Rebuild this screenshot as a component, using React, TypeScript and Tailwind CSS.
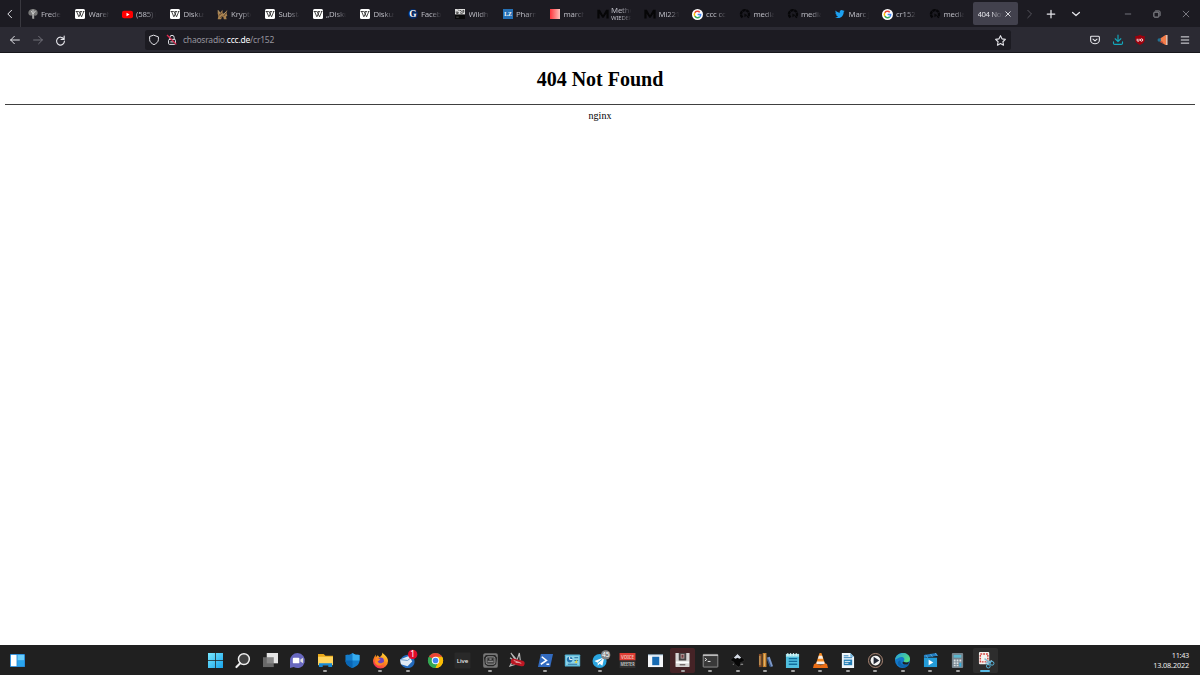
import React from "react";

type IconProps = { children: React.ReactNode; size?: string; box?: string };

function Svg({ children, size = "h-[10px] w-[10px]", box = "0 0 16 16" }: IconProps) {
  return (
    <svg viewBox={box} className={`${size} block shrink-0 overflow-visible`} fill="none">
      {children}
    </svg>
  );
}

const Wiki = () => (
  <Svg>
    <rect width="16" height="16" rx="2.500" fill="#fff" />
    <path d="M1 4h5M7.500 4H11m1.500 0H15M2.500 4l3.700 8.500L8 8.500M6.500 4l4 8.500L14 4M10 4 8 8.500" stroke="#222" strokeWidth="1.300" />
  </Svg>
);
const Tree = () => (
  <Svg>
    <path d="M8 0c4 0 7.500 2 7.500 6S13 11 10 10.500V16H7v-5.500C3 11 .5 9.500.5 6S4 0 8 0Z" fill="#777" />
    <path d="M8 1v14M5 3l3 5M12 3 8 8" stroke="#ccc" strokeWidth="1.500" />
  </Svg>
);
const Youtube = () => (
  <Svg size="h-[11px] w-[11px]">
    <rect y="2.500" width="16" height="11" rx="3" fill="#f00" />
    <path d="m6.500 5.500 4.500 2.500-4.500 2.500Z" fill="#fff" />
  </Svg>
);
const Beast = () => (
  <Svg size="h-[11px] w-[11px]">
    <path d="M1 1l3 5 4-5v5l3 1 4-6-1 6 1 3-2 1 1 4h-4l-1-4-2 1-1 3H1l1-5-1-3Z" fill="#a9824f" />
    <path d="m3 9 4-3m3 4 4-6M5 13l3-3" stroke="#4d3728" strokeWidth="1.300" />
    <path d="M2 2l2 4m6 2 3-4" stroke="#e0c58d" />
  </Svg>
);
const Guardian = () => (
  <Svg>
    <circle cx="8" cy="8" r="8" fill="#052962" />
    <text x="8" y="13" textAnchor="middle" fontSize="15" fontWeight="700" fontFamily="Liberation Serif, serif" fill="#fff">G</text>
  </Svg>
);
const Wild = () => (
  <Svg>
    <rect width="16" height="9" fill="#ddd" />
    <rect y="9" width="16" height="7" fill="#090909" />
    <path d="M1 5h4v2H2m6-5 3 2 3-2v3l-3 2-3-1M5 1l2 2" stroke="#222" strokeWidth="1.300" />
    <path d="M2 13h4" stroke="#777" />
  </Svg>
);
const Lz = () => (
  <Svg>
    <rect width="16" height="16" fill="#2570b5" />
    <text x="8" y="11.500" textAnchor="middle" fontSize="9" fontWeight="700" fontFamily="Liberation Serif, serif" fill="#fff">LZ</text>
  </Svg>
);
const Red = () => (
  <Svg>
    <defs>
      <linearGradient id="march"><stop stopColor="#ff343b" /><stop offset="1" stopColor="#ffc4bd" /></linearGradient>
    </defs>
    <rect width="16" height="16" fill="url(#march)" />
  </Svg>
);
const Medium = () => <Svg><path d="M-1 15V1h4l5 9 5-9h4v14h-3.500V7L9 14H7L2.500 7v8Z" fill="#060607" /></Svg>;
const Google = () => (
  <Svg size="h-[11px] w-[11px]">
    <circle cx="8" cy="8" r="8" fill="#fff" />
    <g strokeWidth="2.200">
      <path d="M11.300 4.800A4.600 4.600 0 0 0 4 5.700" stroke="#ea4335" />
      <path d="M4 5.700a4.600 4.600 0 0 0 0 4.600" stroke="#fbbc05" />
      <path d="M4 10.300a4.600 4.600 0 0 0 7.300.9" stroke="#34a853" />
      <path d="M11.300 11.200A4.600 4.600 0 0 0 12.600 8H8.200" stroke="#4285f4" />
    </g>
  </Svg>
);
const DarkMedia = () => (
  <Svg>
    <path d="M4 13.500A6.500 6.500 0 1 1 12 13.500" stroke="#060608" strokeWidth="3.800" strokeDasharray="5 .8" />
    <path d="m7 7 5 3-5 3Z" fill="#09090b" />
  </Svg>
);
const Twitter = () => (
  <Svg>
    <path d="M15.500 3.200c-.6.300-1.100.4-1.700.5.600-.4 1-1 1.200-1.600-.6.300-1.200.6-1.900.7A3.200 3.200 0 0 0 7.700 6C5 5.900 2.700 4.600 1.100 2.500c-.8 1.500-.4 3.300 1 4.300-.5 0-1-.2-1.400-.4 0 1.500 1 2.900 2.600 3.200-.5.100-1 .1-1.400 0 .4 1.300 1.600 2.200 3 2.200A6.400 6.400 0 0 1 .2 13.200C8 17.300 14 11.400 13.900 4.900c.6-.5 1.200-1 1.600-1.700Z" fill="#1da1f2" />
  </Svg>
);

const tabs: { label: string; icon: React.ReactNode; sub?: string }[] = [
  { label: "Freder", icon: <Tree /> },
  { label: "Wareh", icon: <Wiki /> },
  { label: "(585) L", icon: <Youtube /> },
  { label: "Diskus", icon: <Wiki /> },
  { label: "Krypto", icon: <Beast /> },
  { label: "Substa", icon: <Wiki /> },
  { label: "„Disku", icon: <Wiki /> },
  { label: "Diskus", icon: <Wiki /> },
  { label: "Facebo", icon: <Guardian /> },
  { label: "Wildh", icon: <Wild /> },
  { label: "Pharm", icon: <Lz /> },
  { label: "march", icon: <Red /> },
  { label: "Metho", sub: "WIEDER", icon: <Medium /> },
  { label: "Mi221", icon: <Medium /> },
  { label: "ccc cc", icon: <Google /> },
  { label: "media", icon: <DarkMedia /> },
  { label: "media", icon: <DarkMedia /> },
  { label: "Marc J", icon: <Twitter /> },
  { label: "cr152", icon: <Google /> },
  { label: "media", icon: <DarkMedia /> },
];

function Tab({ tab }: { tab: (typeof tabs)[number] }) {
  return (
    <div className="flex h-full w-[47.500px] shrink-0 items-center pt-[1px] pl-[6px]">
      <div className="flex w-[11px] shrink-0 justify-center">{tab.icon}</div>
      <div className="ml-[3px] w-[21px] overflow-hidden whitespace-nowrap text-[7.800px] leading-[9px] tracking-[-0.18px] text-[#b9b9c1] [mask-image:linear-gradient(to_right,black_45%,transparent_98%)]">
        <div>{tab.label}</div>
        {tab.sub && <div className="text-[6px] leading-[7px]">{tab.sub}</div>}
      </div>
    </div>
  );
}

const strokeProps = { stroke: "#e4e4e9", strokeWidth: 1.6, strokeLinecap: "round" as const, strokeLinejoin: "round" as const };

function Toolbar() {
  return (
    <div className="flex h-[26px] items-center border-b border-[#17161c] bg-[#2b2a33]">
      <div className="flex w-[144.500px] shrink-0 items-center gap-[13px] pt-[1px] pl-[9.500px]">
        <Svg><path d="M15 8H1m6-6L1 8l6 6" {...strokeProps} /></Svg>
        <Svg><path d="M1 8h14M9 2l6 6-6 6" {...strokeProps} stroke="#73727b" /></Svg>
        <Svg size="h-[9px] w-[9px]"><path d="M14 5.500A7 7 0 1 0 15 9M14.500 0v6H9" {...strokeProps} strokeWidth="2" /></Svg>
      </div>
      <div className="flex h-5 w-[866px] shrink-0 items-center rounded-[2.500px] bg-[#1c1b22] pt-[1px] pr-[5px] pl-[4.500px]">
        <Svg><path d="M8 .5 15 3v4.500c0 3.500-3 6-7 8-4-2-7-4.500-7-8V3Z" {...strokeProps} /></Svg>
        <div className="ml-[7.500px]">
          <Svg>
            <rect x="2.500" y="7" width="11" height="8" rx="1.500" {...strokeProps} />
            <path d="M4.500 7V4a3.500 3.500 0 0 1 7 0v3M6 11h4" {...strokeProps} />
            <path d="m0 0 15 15" stroke="#e22850" strokeWidth="2" />
          </Svg>
        </div>
        <span className="ml-[6.500px] text-[8.500px] leading-5 tracking-[-0.22px] text-[#96959e]">chaosradio.<span className="text-[#fbfbfe]">ccc.de</span>/cr152</span>
        <div className="ml-auto"><Svg size="h-[11px] w-[11px]"><path d="m8 1 2.200 4.600 4.900.7-3.600 3.500.9 5L8 12.400l-4.400 2.400.9-5L.9 6.300l4.900-.7Z" {...strokeProps} /></Svg></div>
      </div>
      <div className="ml-auto flex items-center gap-[12.500px] pt-[1px] pr-[10px]">
        <Svg>
          <path d="M2.500 2h11q1.500 0 1.500 1.500V8A7 6 0 0 1 1 8V3.500Q1 2 2.500 2Z" {...strokeProps} strokeWidth="1.800" />
          <path d="m4.800 6.500 3.200 3 3.200-3" {...strokeProps} strokeWidth="1.800" />
        </Svg>
        <Svg><path d="M8 0v10M3.500 6 8 10.500 12.500 6M.8 11v2q0 2 2 2h10.400q2 0 2-2v-2" {...strokeProps} stroke="#13a9bd" strokeWidth="1.800" /></Svg>
        <Svg>
          <path d="M8-.5c2 1.500 4 2 7.500 2V8c0 4-3.500 6-7.500 8C4 14 .5 12 .5 8V1.500c3.500 0 5.500-.5 7.500-2Z" fill="#9b000c" />
          <path d="M3.500 6v3q0 1 1.500 1t1.500-1V6" stroke="#fff" strokeWidth="1.500" />
          <circle cx="10.500" cy="8" r="1.900" stroke="#fff" strokeWidth="1.400" />
        </Svg>
        <Svg>
          <path d="m4 5 8-5h3v16h-3l-8-5Z" fill="#f47d4a" />
          <path d="M13 0h2v16h-2Z" fill="#d7c7c2" />
          <circle cx="2" cy="8" r="2.800" fill="#227293" />
          <path d="M3 11h4l1 3" stroke="#b74339" strokeWidth="1.500" />
        </Svg>
        <Svg><path d="M2 3h12M2 8h12M2 13h12" {...strokeProps} /></Svg>
      </div>
    </div>
  );
}

type TaskItem = { art: React.ReactNode; dot?: boolean; state?: "red" | "active" };

const taskItems: TaskItem[] = [
  { art: <><defs><linearGradient id="win" x2="1" y2="1"><stop stopColor="#78e8ff" /><stop offset="1" stopColor="#18a4eb" /></linearGradient></defs><path d="M0 0h7.600v7.600H0ZM8.400 0H16v7.600H8.400ZM0 8.400h7.600V16H0ZM8.400 8.400H16V16H8.400Z" fill="url(#win)" /></> },
  { art: <><circle cx="9.500" cy="6.500" r="5.800" fill="#414141" stroke="#eee" strokeWidth="1.600" /><path d="m5.500 11-4 4" stroke="#eee" strokeWidth="2.200" strokeLinecap="round" /></> },
  { art: <><path d="M4 0h12v11H4Z" fill="#e5e5e5" /><path d="M0 4.500h11.500V15H0Z" fill="#777" fillOpacity=".85" /></> },
  { art: <><path d="M8 0a8 8 0 1 1-4 15L0 16V8a8 8 0 0 1 8-8Z" fill="#6868bf" /><rect x="3" y="5" width="7" height="6" rx="1" fill="#fff" /><path d="m11 7 3-2v6l-3-2Z" fill="#ddd" /></> },
  { dot: true, art: <><path d="M0 1h6l2 2h8v4H0Z" fill="#e9a819" /><path d="M0 4h16v9H0Z" fill="#ffd45c" /><path d="M1 11h14v4h-4v-2H5v2H1Z" fill="#1689d6" /></> },
  { art: <><path d="M8 0c2 2 5 2 7.500 2v6c0 4-3.500 6.500-7.500 8C4 14.500.5 12 .5 8V2C3 2 6 2 8 0Z" fill="#147dcc" /><path d="M8 0c2 2 5 2 7.500 2v6H8Z" fill="#36aef1" /><path d="M.5 8H8v8C4 14.500.5 12 .5 8Z" fill="#0965b3" /></> },
  { dot: true, art: <><defs><linearGradient id="fox" x1=".8" x2=".2" y2="1"><stop stopColor="#ffdf38" /><stop offset=".5" stopColor="#ff851b" /><stop offset="1" stopColor="#f62060" /></linearGradient></defs><path d="M10-.5c1 2 6 4 6 9a8 8 0 0 1-16 0c0-2 1-4 3-7v3l2-2 2 2c2-1 3-3 3-5Z" fill="url(#fox)" /><circle cx="8" cy="8.500" r="3.700" fill="#7043be" /><path d="M3 5c2 0 4 1 5 2l-3 2c1 2 4 3 7 0-1 5-8 6-10 1Z" fill="#ff8a25" /></> },
  { dot: true, art: <><path d="M1 6C4 1 13 0 15 6s-2 10-7 10S-1 11 1 6Z" fill="#2269bb" /><path d="m0 7 10-4 3 6-5 5-7-2Z" fill="#dfeaf5" /><path d="m0 7 8 1 5-4" stroke="#6796c7" /><circle cx="13.500" cy="1.500" r="5" fill="#e20b2b" /><text x="13.500" y="4.700" textAnchor="middle" fontSize="9" fill="#fff">1</text></> },
  { art: <><circle cx="8" cy="8" r="8" fill="#34a853" /><path d="M1 4a8 8 0 0 1 14 0L8 8Z" fill="#ea4335" /><path d="M15 4a8 8 0 0 1-7 12V8Z" fill="#fbbc05" /><path d="M1 4a8 8 0 0 0 7 12l3-6-3-2Z" fill="#34a853" /><path d="M15 4H8v4l3 2-3 6a8 8 0 0 0 7-12Z" fill="#fbbc05" /><circle cx="8" cy="8" r="4" fill="#fff" /><circle cx="8" cy="8" r="3" fill="#4285f4" /></> },
  { art: <><rect x="-.5" y="-.5" width="17" height="17" rx="1" fill="#292929" /><text x="8" y="10.500" textAnchor="middle" fontSize="6.500" fontWeight="500" fill="#eee">Live</text></> },
  { dot: true, art: <><rect x=".2" y=".2" width="15.600" height="15.600" rx="2" fill="#777" /><path d="M3 2h10l2 3-1 7-3 2H5l-3-2L1 5Z" fill="#262626" /><rect x="3.300" y="4" width="9.500" height="8" rx="2" fill="#4a4a4a" stroke="#aaa" strokeWidth=".8" /><path d="M5 6.500h6M5 9h6" stroke="#888" strokeWidth="1.200" /><circle cx="6" cy="6.500" r="1" fill="#222" /><circle cx="10" cy="6.500" r="1" fill="#222" /></> },
  { art: <><path d="M6 8 1 0l7 8m-1 1 3-9 1 8M4 8 0 5m2 5-2 4 6-2" stroke="#bbb" strokeWidth="1.200" /><rect x="1" y="7" width="15" height="6" rx="3" transform="rotate(14 8 9)" fill="#bd1723" /><path d="m4 8 8 3m-6-1 4 0" stroke="#e1aaa9" /></> },
  { dot: true, art: <><path d="M3 1h13l-3 14H0Z" fill="#326bc0" /><path d="m4 4 5 4-6 4m6 0h3" stroke="#fff" strokeWidth="1.700" /></> },
  { art: <><rect x="-.2" y="1.500" width="16.400" height="13" rx="1" fill="#55b4d6" /><rect x="1" y="3" width="14" height="10" fill="#8bd2e8" /><circle cx="5" cy="7" r="3" fill="#2474ae" /><path d="M5 4v3h3" stroke="#fff" /><path d="M10 5h4m-4 3h4M3 12h10" stroke="#266b96" /><path d="m10 10 3-3v4Z" fill="#ddd044" /></> },
  { dot: true, art: <><circle cx="7" cy="8.500" r="7.500" fill="#2aa5df" /><path d="m1.500 8.500 10.500-4-2 9-3-2-2 2v-3Z" fill="#fff" /><path d="m5 10.500 5-4" stroke="#2aa5df" /><circle cx="13.500" cy="2" r="5" fill="#858585" /><text x="13.500" y="4.500" textAnchor="middle" fontSize="7" fill="#fff">45</text></> },
  { art: <><rect x="-.5" y="0" width="17" height="8" fill="#de3d34" /><rect x="-.5" y="8" width="17" height="8" fill="#303030" /><text x="8" y="6.200" textAnchor="middle" fontSize="5.500" textLength="14" lengthAdjust="spacingAndGlyphs" fontWeight="600" fill="#efc4bd">VOICE</text><text x="8" y="14" textAnchor="middle" fontSize="5" textLength="15" lengthAdjust="spacingAndGlyphs" fontWeight="600" fill="#d2d2d2">MEETER</text></> },
  { art: <><rect x="0" y="2" width="16" height="13" fill="#f5f7fa" /><rect x="4.500" y="4" width="7.500" height="9" fill="#176bb3" /><path d="M0 2h16" stroke="#a8cbe0" /></> },
  { dot: true, state: "red", art: <><rect x=".5" y="0" width="15" height="15" rx=".5" fill="#d7d5d4" /><path d="M4 0h8v8H4Z" fill="#474344" /><rect x="6" y="1" width="4" height="5" fill="#b09b9b" /><rect x="7" y="2" width="2" height="3" fill="#743c3e" /><path d="M1 10h14" stroke="#fff" strokeWidth="2" /><path d="M5 12.500h6" stroke="#756b6b" strokeWidth="1.500" /></> },
  { dot: true, art: <><rect x=".2" y="1.500" width="15.600" height="13.500" rx=".5" fill="#393939" stroke="#aaa" strokeWidth=".8" /><path d="M0 2.500h16" stroke="#bbb" strokeWidth="1.500" /><path d="m2 5.500 2 1.500-2 1.500M5 9h3" stroke="#eee" /></> },
  { dot: true, art: <><path d="m8 0 7 7q1.500 2-2 2.500l-2 1 2 1.500-4 3-4-3-1-2.500Q-.5 9 1 7Z" fill="#070707" stroke="#444" strokeWidth=".5" /><path d="m8 1 4 4-2 1-2-1-2 1-2-1Z" fill="#d7dce6" /><path d="M11 12h3M3 12h1" stroke="#aaa" /></> },
  { dot: true, art: <><path d="M1 1h3v14H1Z" fill="#864c25" /><path d="M5 0h4v15H5Z" fill="#c98331" /><path d="m9.500 5 3-1L16 14l-3 1Z" fill="#7e99c9" /><path d="M2 3v10M7 1v13" stroke="#e1ba70" /><path d="m10 6 3.500 9" stroke="#345383" strokeWidth="1.500" /></> },
  { dot: true, art: <><path d="M1 1h14v15H1Z" fill="#50bfdf" /><path d="M1 1h14v3H1Z" fill="#a5e4ed" /><path d="M4 6h9M4 9h9m-9 3h9" stroke="#116d9c" strokeWidth="1.400" /><path d="M3 0v3m3-3v3m3-3v3m3-3v3" stroke="#e4f7f8" /></> },
  { dot: true, art: <><path d="M7 0h2l4 12H3Z" fill="#f78a20" /><path d="M6.200 3h3.600l1 3H5.200ZM4.200 9h7.600l1 3H3.200Z" fill="#f5eee8" /><path d="M3 11 1 12l-1 4h16l-1-4-2-1q-5 4-10 0Z" fill="#e96d15" /></> },
  { dot: true, art: <><path d="M2 0h9l4 4v12H2Z" fill="#eff7fc" /><path d="M11 0v4h4Z" fill="#6baed7" /><path d="M4 3h5M4 5h9" stroke="#257bb4" /><path d="M4 7h9v6H4Z" fill="#247fb7" /><path d="M5 9h6m-6 2h4" stroke="#e7f1f6" /></> },
  { dot: true, art: <><circle cx="8" cy="8" r="7.500" fill="#292624" stroke="#b18b79" strokeWidth="1" /><circle cx="8" cy="8" r="5.200" fill="#f3f3f3" /><path d="m6 4 6 4-6 4Z" fill="#242936" /></> },
  { dot: true, art: <><defs><linearGradient id="edge" x2="1" y2=".6"><stop stopColor="#249be0" /><stop offset="1" stopColor="#54df81" /></linearGradient></defs><circle cx="8" cy="8" r="8" fill="#1379cb" /><path d="M0 7C2-2 15-2 16 6c0 4-4 5-7 3 3-3-1-6-5-4-2 1-3 2-4 2Z" fill="url(#edge)" /><path d="M6 8c-1 5 5 6 9 4-2 4-8 5-11 1-2-2-1-5 2-5Z" fill="#0d64ac" /><path d="M9 9c2 2 5 1 6 0l-1 3c-3 1-6 0-6-2Z" fill="#202020" /></> },
  { dot: true, art: <><path d="m1 2 13-2 2 3-15 2Z" fill="#237dc1" /><path d="M1 5h14v10H1Z" fill="#239bd7" /><path d="m3 2 2 3m3-4 2 3m3-4 2 3" stroke="#55a9d8" strokeWidth="1" /><path d="m6 7 5 3-5 3Z" fill="#fff" /></> },
  { dot: true, art: <><rect x="2" y="0" width="12" height="16" rx="1" fill="#77858e" /><path d="M4 2h8v3H4Z" fill="#5bb8d0" /><path d="M5 7v7m3-7v7m3-7v3" stroke="#d9e0e4" strokeWidth="2" strokeDasharray="2 .8" /><path d="M11 10.500v4" stroke="#31aee0" strokeWidth="2" /></> },
  { state: "active", art: <><rect x="1" y="-1" width="11" height="13" rx="1" fill="#f4f3f0" /><rect x="2.500" y="1" width="8" height="8.500" stroke="#d3423d" strokeWidth="1.500" strokeDasharray="2 1" /><path d="m7 6 6 5m-5 0 7-3m-4 0v5" stroke="#85b6cd" strokeWidth="1.400" /><circle cx="11" cy="14" r="2" stroke="#5bbde5" /><circle cx="15" cy="11" r="2" stroke="#5bbde5" /></> },
];

function TaskButton({ item }: { item: TaskItem }) {
  return (
    <div className="flex h-full w-[27.500px] items-center justify-center">
      <div className={`flex h-[25px] w-[25px] flex-col items-center rounded-[2px] pt-[5px] ${item.state === "red" ? "bg-[#452326]" : item.state === "active" ? "bg-[#2d2d2d]" : ""}`}>
        <Svg size="h-[15px] w-[15px]">{item.art}</Svg>
        {item.state === "active"
          ? <div className="mt-[2.500px] h-[2px] w-[10px] rounded-full bg-[#58bae5]" />
          : item.dot && <div className="mt-[2.500px] h-[2px] w-[4px] rounded-full bg-[#a4a4a4]" />}
      </div>
    </div>
  );
}

export default function App() {
  return (
    <div className="flex h-[675px] w-[1200px] flex-col overflow-hidden bg-white font-['Noto_Sans','Open_Sans',sans-serif]">
      <header className="shrink-0">
        <div className="flex h-[27px] items-center bg-[#1c1b22]">
          <div className="flex h-full w-[21px] items-center justify-center border-r border-[#39383f]">
            <Svg><path d="m10.500 2-6 6 6 6" {...strokeProps} /></Svg>
          </div>
          {tabs.map((tab, i) => <Tab key={i} tab={tab} />)}
          <div className="ml-[1.500px] flex h-[23px] w-[45px] items-center rounded-[2px] bg-[#42414d] pl-[5px]">
            <span className="w-[25px] overflow-hidden whitespace-nowrap text-[7.800px] leading-[10px] tracking-[-0.4px] text-[#e1e1e7] [mask-image:linear-gradient(to_right,black_50%,transparent)]">404 Not</span>
            <Svg size="ml-[2px] h-[6px] w-[6px]"><path d="m2 2 12 12M14 2 2 14" {...strokeProps} strokeWidth="2.500" /></Svg>
          </div>
          <div className="ml-[6px]"><Svg><path d="m6 2 6 6-6 6" {...strokeProps} stroke="#56555d" /></Svg></div>
          <div className="ml-[12px]"><Svg><path d="M8 2v12M2 8h12" {...strokeProps} strokeWidth="2" /></Svg></div>
          <div className="ml-[15px]"><Svg><path d="m2.500 5.500 5.500 5 5.500-5" {...strokeProps} strokeWidth="2" /></Svg></div>
          <div className="ml-auto flex items-center gap-[19px] pr-[9.500px]">
            <Svg><path d="M3 8h10" stroke="#777780" strokeWidth="1.500" /></Svg>
            <Svg><rect x="3" y="5" width="8" height="8" rx="1" stroke="#aaaab0" strokeWidth="1.400" /><path d="M5 3h6q2 0 2 2v6" stroke="#8e8e94" strokeWidth="1.400" /></Svg>
            <Svg><path d="m3 3 10 10M13 3 3 13" stroke="#96969d" strokeWidth="1.200" /></Svg>
          </div>
        </div>
        <Toolbar />
      </header>
      <main className="flex-1 px-[5px] text-center font-['Liberation_Serif',serif] text-black">
        <h1 className="pt-[14px] text-[20px] leading-[24px] font-bold">404 Not Found</h1>
        <hr className="mt-[13px] border-t border-[#404040]" />
        <p className="pt-[5px] text-[10px] leading-[12px]">nginx</p>
      </main>
      <footer className="flex h-[30px] shrink-0 items-center bg-[#202020]">
        <div className="flex w-[201.500px] shrink-0 pl-[9.500px]">
          <Svg size="h-[15px] w-[15px]">
            <rect y="1" width="16" height="14" rx="1" fill="#278bda" />
            <path d="M1 2h6v12H1Z" fill="#fff" />
            <path d="M8 2h7v6H8Z" fill="#69cdfa" />
            <path d="M8 8h7v6H8Z" fill="#29a5ee" />
          </Svg>
        </div>
        {taskItems.map((item, i) => <TaskButton key={i} item={item} />)}
        <div className="ml-auto pr-[11px] text-right text-[7.300px] leading-[10px] text-[#eeeeee]">
          <div className="tracking-[-0.3px]">11:43</div>
          <div className="tracking-[-0.15px]">13.08.2022</div>
        </div>
      </footer>
    </div>
  );
}
